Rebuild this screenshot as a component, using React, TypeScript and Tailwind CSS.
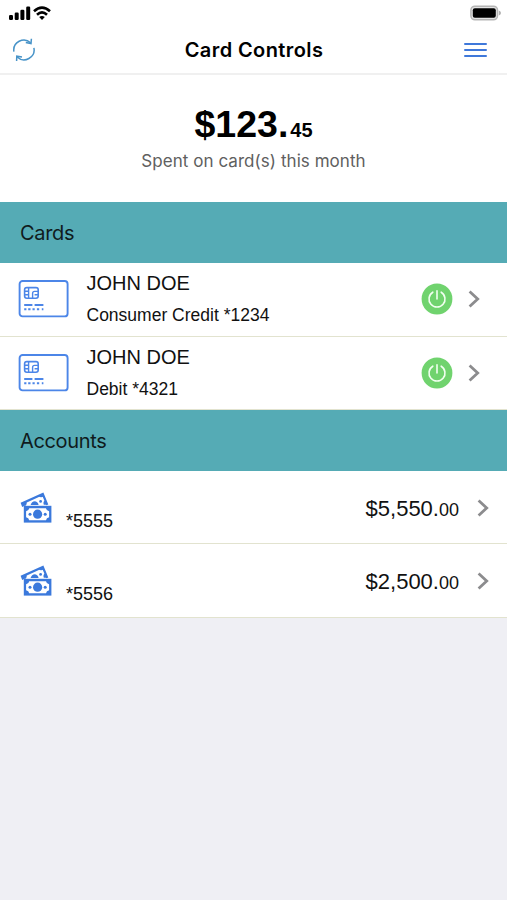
interface Card {
  name: string;
  description: string;
}

interface Account {
  mask: string;
  dollars: string;
  cents: string;
}

const CARDS: Card[] = [
  { name: 'JOHN DOE', description: 'Consumer Credit *1234' },
  { name: 'JOHN DOE', description: 'Debit *4321' },
];

const ACCOUNTS: Account[] = [
  { mask: '*5555', dollars: '$5,550.', cents: '00' },
  { mask: '*5556', dollars: '$2,500.', cents: '00' },
];

function StatusBar() {
  return (
    <div className="flex h-[26px] items-start justify-between pt-[5px] pr-[6px] pl-[9px]">
      <svg width="43" height="16" viewBox="0 0 43 16" fill="none">
        <g fill="#000">
          <rect x="0" y="10" width="4" height="5" rx="1.2" />
          <rect x="5.7" y="7.5" width="4" height="7.5" rx="1.2" />
          <rect x="11.4" y="4.8" width="4" height="10.2" rx="1.2" />
          <rect x="17.2" y="1.5" width="4" height="13.5" rx="1.2" />
          <path d="M33 15 L30.2 12.1 Q33 9.7 35.8 12.1 Z" />
        </g>
        <path d="M25 6.3 Q33 -1 41 6.3 M28 9.7 Q33 5 38 9.7" stroke="#000" strokeWidth="2.6" />
      </svg>
      <svg width="31" height="16" viewBox="0 0 31 16">
        <rect x="0.9" y="1.2" width="26.6" height="13.6" rx="4" fill="#e4e4e4" stroke="#b5b5b5" strokeWidth="1.5" />
        <rect x="2.8" y="3.2" width="23" height="9.6" rx="2" fill="#000" />
        <path d="M28.8 5.6 Q31 6.4 31 8 Q31 9.6 28.8 10.4 Z" fill="#b0b0b0" />
      </svg>
    </div>
  );
}

function RefreshIcon() {
  return (
    <svg width="24" height="24" viewBox="0 0 24 24" fill="none" stroke="#4793c8" strokeWidth="1.5">
      <path d="M1.9 13.6 A10 10 0 0 1 18.6 4.8" />
      <path d="M21.9 9.8 A10 10 0 0 1 5.2 19" />
      <path d="M19.4 0.8 L19 5.6 L13.8 4.6" />
      <path d="M4.6 23 L4.8 18.2 L10 19" />
    </svg>
  );
}

function CardIcon() {
  return (
    <svg width="51" height="38" viewBox="0 0 51 38" fill="none" stroke="#4c86e8">
      <rect x="1.6" y="1" width="48" height="35.4" rx="3" strokeWidth="1.9" />
      <rect x="6.6" y="7.6" width="13.6" height="10.6" rx="2.2" strokeWidth="1.6" />
      <path
        d="M6.6 11.2 H10.6 M6.6 14.8 H10.6 M10.6 7.6 V18.2 M14.6 18.2 V13.4 Q14.6 11.4 16.6 11.4 H20.2 M16.6 14.8 H20.2"
        strokeWidth="1.4"
      />
      <path d="M6.2 25 H14.4 M16.6 25 H25.4" strokeWidth="2" />
      <path d="M6.2 29.2 H8.4 M10.2 29.2 H12.5 M14.5 29.2 H16.7 M18.9 29.2 H21.2 M23.8 29.2 H25.4" strokeWidth="1.9" />
    </svg>
  );
}

function MoneyIcon() {
  return (
    <svg width="32" height="31" viewBox="0 0 32 31" fill="none">
      <path d="M3.2 14.5 L2 11.4 L22.8 2 L27.3 12.8" stroke="#3b79dc" strokeWidth="2.2" />
      <path
        d="M2 11.4 L6.5 9.4 Q7.3 11.6 5.6 13.8 L3 14 Z M18.6 3.9 Q20 6.2 23.8 4.6 L22.8 2 Z M25.4 8.2 Q22.6 9.6 23.8 12.8 H27.3 Z"
        fill="#3b79dc"
      />
      <path d="M10.6 13 Q11.6 9.2 15 9.2 Q18 9.6 18.6 13 Z" fill="#3b79dc" />
      <circle cx="20.6" cy="9.4" r="1.4" fill="#3b79dc" />
      <rect x="3.8" y="13.8" width="27.6" height="16.8" fill="#3b79dc" />
      <path
        d="M9.2 16.2 H26 Q26.4 18.8 29.1 19.2 V25.2 Q26.4 25.6 26 28.2 H9.2 Q8.8 25.6 6.1 25.2 V19.2 Q8.8 18.8 9.2 16.2 Z"
        fill="#fff"
      />
      <circle cx="17.6" cy="22.2" r="4.6" fill="#3b79dc" />
      <circle cx="10" cy="22.2" r="1.5" fill="#3b79dc" />
      <circle cx="25.2" cy="22.2" r="1.5" fill="#3b79dc" />
    </svg>
  );
}

function PowerIcon() {
  return (
    <svg width="32" height="32" viewBox="0 0 32 32" fill="none">
      <circle cx="16" cy="16" r="15.4" fill="#70d36e" />
      <path d="M11.8 9.2 A8 8 0 1 0 20.2 9.2 M16 7.8 V16" stroke="#f1fff0" strokeWidth="1.6" strokeLinecap="round" />
    </svg>
  );
}

function Chevron() {
  return (
    <svg width="12" height="18" viewBox="0 0 12 18" fill="none">
      <path d="M1.6 1.5 L9.7 9 L1.6 16.5" stroke="#8c8c8e" strokeWidth="2.8" />
    </svg>
  );
}

function SectionHeader({ title }: { title: string }) {
  return (
    <h2 className="flex h-[61px] items-center bg-[#55abb5] pt-px pl-5 font-[Inter,sans-serif] text-[20px] leading-6 tracking-[-0.35px] text-[#101b1d]">
      {title}
    </h2>
  );
}

function CardRow({ card }: { card: Card }) {
  return (
    <li className="flex h-[73.5px] items-center border-b border-[#e2e3cf] pr-[27px] pl-[18px]">
      <CardIcon />
      <div className="ml-[17.5px] flex-1">
        <div className="text-[20px] leading-6">{card.name}</div>
        <div className="mt-2 text-[17.5px] leading-6">{card.description}</div>
      </div>
      <PowerIcon />
      <div className="ml-[15px]">
        <Chevron />
      </div>
    </li>
  );
}

function AccountRow({ account }: { account: Account }) {
  return (
    <li className="flex h-[73.25px] items-center border-b border-[#e2e3cf] pt-px pr-[18px] pl-5">
      <MoneyIcon />
      <span className="mt-[27px] ml-[14px] flex-1 text-[18px] leading-6">{account.mask}</span>
      <span className="mt-[3px] text-[22px] leading-7">
        {account.dollars}
        <span className="text-[18px]">{account.cents}</span>
      </span>
      <div className="ml-[18px]">
        <Chevron />
      </div>
    </li>
  );
}

export default function App() {
  return (
    <div className="min-h-[900px] w-full bg-[#efeff4] font-['Liberation_Sans',Arial,sans-serif] text-[#111]">
      <header className="h-[75px] border-b-2 border-[#f0f0f0] bg-white">
        <StatusBar />
        <div className="flex h-[47px] items-center justify-between pr-5 pl-3">
          <button type="button" aria-label="Refresh">
            <RefreshIcon />
          </button>
          <h1 className="relative left-[4px] font-[Inter,sans-serif] text-[20px] font-semibold tracking-[0.4px] text-black">
            Card Controls
          </h1>
          <button type="button" aria-label="Menu" className="flex w-[23px] flex-col gap-1">
            <span className="h-0.5 rounded-full bg-[#3f78da]" />
            <span className="h-0.5 rounded-full bg-[#3f78da]" />
            <span className="h-0.5 rounded-full bg-[#3f78da]" />
          </button>
        </div>
      </header>

      <section className="h-[127px] bg-white pt-[27px] text-center">
        <div className="text-[37.5px] leading-[44px] font-bold text-black">
          $123.<span className="ml-[2px] text-[20px]">45</span>
        </div>
        <p className="-mt-[3px] font-[Inter,sans-serif] text-[17px] leading-6 tracking-[0.05px] text-[#606060]">
          Spent on card(s) this month
        </p>
      </section>

      <SectionHeader title="Cards" />
      <ul className="bg-white">
        {CARDS.map((card) => (
          <CardRow key={card.description} card={card} />
        ))}
      </ul>

      <SectionHeader title="Accounts" />
      <ul className="bg-white">
        {ACCOUNTS.map((account) => (
          <AccountRow key={account.mask} account={account} />
        ))}
      </ul>
    </div>
  );
}
